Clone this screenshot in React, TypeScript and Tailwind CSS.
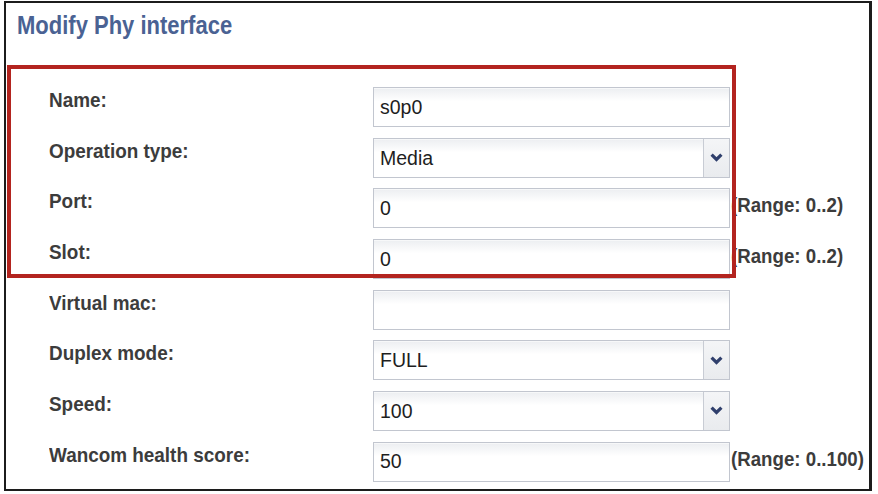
import React from "react";

type Row = {
  label: string;
  value: string;
  select?: boolean;
  range?: string;
};

const rows: Row[] = [
  { label: "Name:", value: "s0p0" },
  { label: "Operation type:", value: "Media", select: true },
  { label: "Port:", value: "0", range: "(Range: 0..2)" },
  { label: "Slot:", value: "0", range: "(Range: 0..2)" },
  { label: "Virtual mac:", value: "" },
  { label: "Duplex mode:", value: "FULL", select: true },
  { label: "Speed:", value: "100", select: true },
  { label: "Wancom health score:", value: "50", range: "(Range: 0..100)" },
];

function Chevron() {
  return (
    <svg width="13" height="9" viewBox="0 0 13 9">
      <polyline points="1.6,1.6 6.5,6.4 11.4,1.6" fill="none" stroke="#2f3f6c" strokeWidth="3.2" />
    </svg>
  );
}

function Field({ row }: { row: Row }) {
  return (
    <div className="flex h-[40px] w-[357px] shrink-0 items-center border border-[#c2c6cf] bg-linear-to-b from-[#eceef1] to-white to-[35%] shadow-[inset_0_1px_0_#f7f8f9]">
      <span className="flex-1 pl-[6px] pt-[1px] text-[19.5px] text-[#1e1e1e]">{row.value}</span>
      {row.select && (
        <div className="flex h-full w-[26px] items-center justify-center rounded-tr-[3px] border-l border-[#c8ccd4] bg-linear-to-b from-[#f4f5f7] to-[#e9ebee]">
          <Chevron />
        </div>
      )}
    </div>
  );
}

export default function App() {
  return (
    <div className="h-[494px] w-[878px] bg-white pl-[4px] pt-[1px] font-['Liberation_Sans',Arial,sans-serif]">
      <div className="relative h-[490px] w-[868px] border-2 border-r-[3px] border-[#1c1c1c]">
        <h1 className="pl-[11px] pt-[8px] text-[25px] leading-[28px] font-bold text-[#4a6293]">
          <span className="inline-block origin-left scale-x-[0.88]">Modify Phy interface</span>
        </h1>

        <div className="mt-[48px] flex flex-col gap-[10.67px]">
          {rows.map((row) => (
            <div key={row.label} className="flex h-[40px] items-start">
              <div className="w-[367px] shrink-0 whitespace-nowrap pl-[43px] pt-[1px] text-[21px] leading-[24px] font-bold text-[#3c3c3c]">
                <span className="inline-block origin-left scale-x-90">{row.label}</span>
              </div>
              <Field row={row} />
              {row.range && (
                <div className="shrink-0 whitespace-nowrap pt-[5px] pl-[1px] text-[21px] leading-[24px] font-bold text-[#3c3c3c]">
                  <span className="inline-block origin-left scale-x-[0.89]">{row.range}</span>
                </div>
              )}
            </div>
          ))}
        </div>

        {/* red highlight annotation */}
        <div className="absolute left-[1px] top-[62px] h-[213px] w-[729px] border-4 border-[#b3241f]" />
      </div>
    </div>
  );
}
